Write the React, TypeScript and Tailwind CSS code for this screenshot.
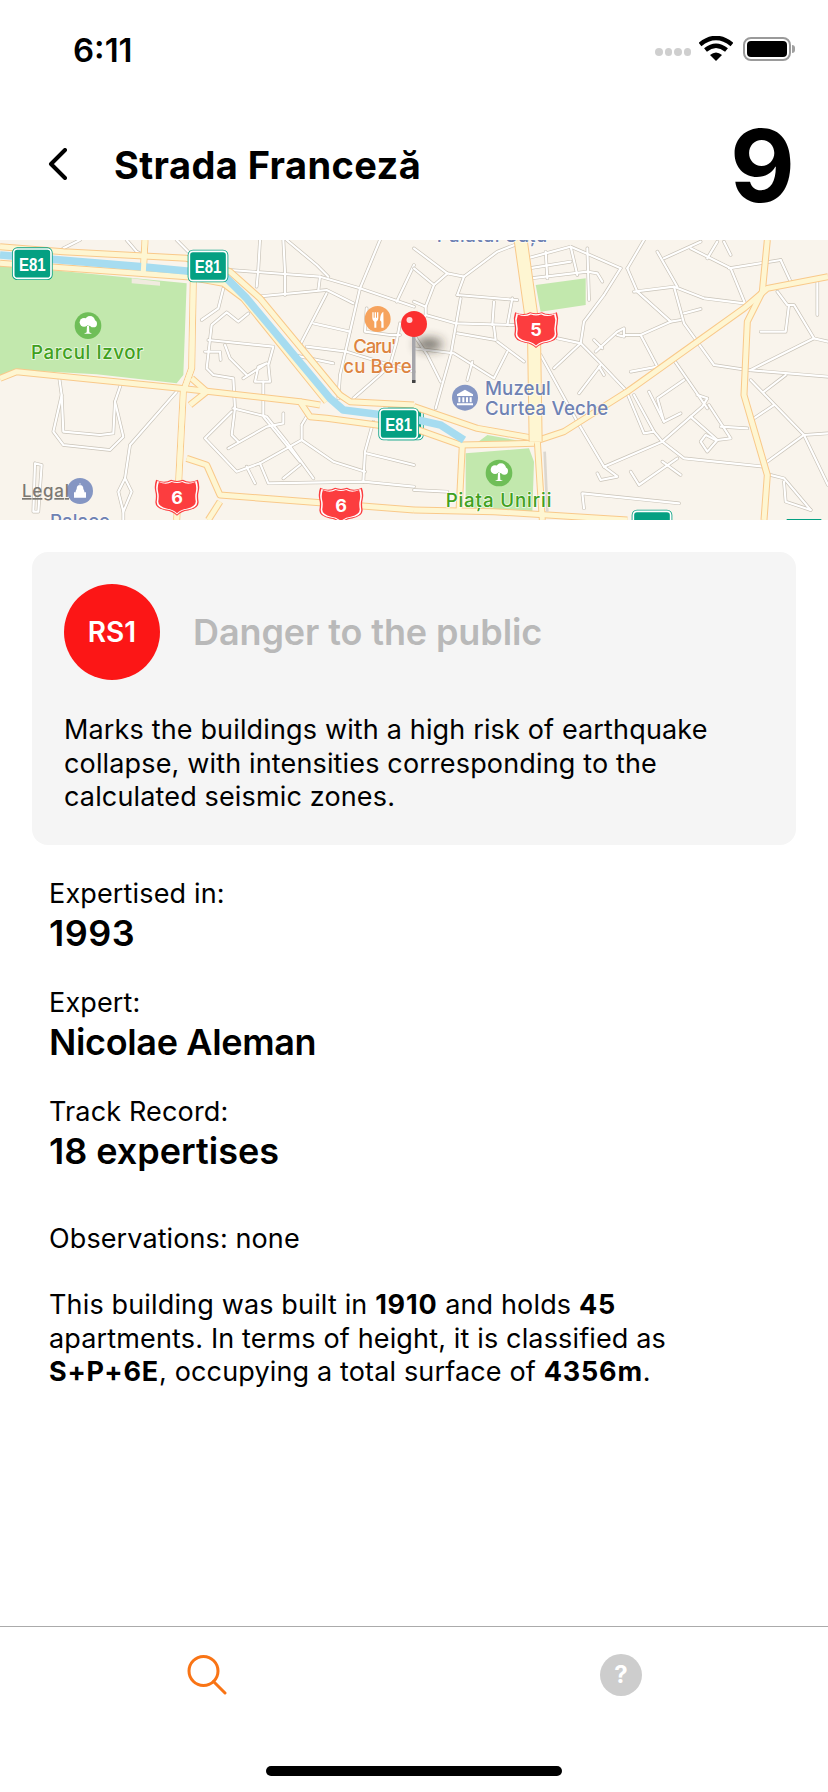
const minorL = [
  "190,40 240,15","380,15 410,50 430,60","530,15 565,50","780,15 775,100 770,155","850,15 855,110 855,180",
  "690,105 960,125 1080,160 1242,215","860,15 950,90 985,125","1140,15 1080,160 1020,420 1015,490","1242,90 1190,200",
  "770,185 980,165 1060,205","960,125 955,165","980,175 900,330","940,265 1050,290","920,335 1040,350 1170,390 1242,410",
  "880,360 1000,385","1100,220 1095,290 1170,300 1200,300","1200,265 1190,320 1170,390 1140,420 1060,490",
  "670,160 655,220 605,255","745,235 715,260 680,232 635,270 620,400 640,420 700,430 705,520 695,600 715,620",
  "625,315 820,335 805,390 810,440 765,440 775,395 800,385 730,430","615,350 660,350 662,375","675,330 690,370 740,420",
  "700,520 800,545 860,620 940,730","790,440 790,545 900,680","850,535 850,565 800,575 685,640",
  "905,570 905,615 780,685 710,710 615,610 695,530","920,545 905,570","780,685 805,745 1090,740 1242,755","740,695 765,745",
  "900,690 850,730","1120,560 1095,650 1090,740","1100,655 1242,690","905,615 1000,680 1095,710","530,470 390,630 375,730",
  "178,430 185,480 160,590 190,630 330,645 370,605 345,500 362,450","185,480 190,590 300,600 340,595 345,500",
  "375,730 355,770 370,830 395,770 375,730","370,830 370,855","105,685 125,690 115,830 100,830 105,685",
];
const minorR = [
  "0,40 100,115 150,125 250,50 340,15","0,100 60,150 35,215","100,115 60,150","130,180 310,195","150,125 130,180","35,240 125,265 300,270",
  "140,190 110,360 65,520","240,200 235,270","295,190 280,270","130,295 245,315 240,275","0,340 120,355 240,430 280,350",
  "250,320 330,380","175,380 160,435","0,300 40,360 80,440","340,70 470,35 620,100","345,100 470,80","350,130 520,110 550,115 565,140",
  "470,35 490,120","395,50 400,130","520,40 525,195","640,100 690,15","620,100 570,180 510,260 500,325 555,380 640,470","430,310 500,325 420,400",
  "380,360 490,560 570,695 745,620 865,515 880,490 850,480","560,390 495,475","555,395 570,420","540,315 565,340",
  "545,350 610,290 630,280 630,305 610,300","635,300 680,300 770,260 800,255","680,300 730,395 650,410","780,375 880,520",
  "810,435 730,490 750,560 800,535","705,470 750,560","640,475 690,595 720,590 660,480","720,590 745,620 810,670 1050,695",
  "830,545 910,615 950,610 885,510","910,615 880,650 860,620 875,600 905,615","660,170 780,155 810,265 900,390 1000,405 1242,425",
  "780,155 870,190 990,205","730,50 790,155","640,100 670,170 770,260","750,70 860,20","830,40 950,100 995,210","945,100 1100,75","880,70 910,20",
  "950,60 930,20","810,235 860,222","1100,75 1130,140","1210,140 1210,240","1090,170 1120,210 1140,210 1200,310 1242,320","1040,290 1115,290 1125,210",
  "1200,310 1010,405","1010,435 1170,600 1242,595","1170,600 1242,750","1080,510 1020,550","1000,580 920,575","1060,680 1170,600","1115,420 1050,470",
  "1070,720 1110,730 1190,825","1110,740 1115,800 1190,825","550,715 560,735 610,725 570,695","650,710 675,750 790,670","745,680 800,720",
  "510,820 505,775 795,805","0,765 100,770","0,200 35,215 35,240 0,300",
];
const majorL = [
  "0,35 190,50 560,70 690,110 780,190 1020,480 1050,500 1242,510","0,85 560,125 670,145 730,190 980,500",
  "435,15 430,110","0,430 50,410 540,460 900,500 930,545 980,550 1242,585","580,130 575,400 550,470 530,855",
  "560,670 620,690 660,780 1242,825","660,800 625,855","575,430 620,470 570,510","900,500 960,510",
];
const majorR = [
  "1060,15 1045,170 1000,260 990,480 1060,720 1050,855","360,620 450,590 640,470 850,320 990,220 1060,160 1242,125",
  "0,515 190,580 360,610","0,580 140,630 360,625","145,630 135,830","0,825 240,830 640,855","370,620 385,855",
];

const SHIELD = "M-56,-46 Q-34,-36 -16,-46 Q0,-40 16,-46 Q34,-36 56,-46 Q62,-30 58,-14 Q55,-4 58,14 Q58,30 30,36 Q12,38 0,50 Q-12,38 -30,36 Q-58,30 -58,14 Q-55,-4 -58,-14 Q-62,-30 -56,-46 Z";

function Shield({ x, y, n }: { x: number; y: number; n: string }) {
  return (
    <g transform={`translate(${x} ${y})`}>
      <path d={SHIELD} fill="#fc3d3f" transform="scale(1.12)" />
      <path d={SHIELD} fill="#fff" transform="scale(1.05)" />
      <path d={SHIELD} fill="#fc3d3f" transform="scale(0.97)" />
      <text y="20" textAnchor="middle" fontSize="54" fontWeight="700" fill="#fff" fontFamily="Inter, sans-serif">{n}</text>
    </g>
  );
}

function Badge({ x, y, clip }: { x: number; y: number; clip?: boolean }) {
  return (
    <g transform={`translate(${x} ${y})`}>
      <rect x="-61" y="-49" width="122" height="98" rx="16" fill="#04a082" />
      <rect x="-56" y="-44" width="112" height="88" rx="11" fill="none" stroke="#fff" strokeWidth="5" />
      {!clip && <text y="21" textAnchor="middle" fontSize="56" fontWeight="700" fill="#fff" fontFamily="'Liberation Sans', sans-serif" textLength="80" lengthAdjust="spacingAndGlyphs">E81</text>}
    </g>
  );
}

function Tree({ x, y }: { x: number; y: number }) {
  return (
    <g transform={`translate(${x} ${y})`}>
      <circle r="40" fill="#6fbe58" />
      <circle cy="-10" cx="-12" r="13" fill="#fff" />
      <circle cy="-14" cx="6" r="15" fill="#fff" />
      <circle cy="-6" cx="16" r="11" fill="#fff" />
      <path d="M-3,0 L3,0 L4,20 L12,24 L-12,24 L-4,20 Z" fill="#fff" />
    </g>
  );
}

function Museum({ x, y, dome }: { x: number; y: number; dome?: boolean }) {
  return (
    <g transform={`translate(${x} ${y})`}>
      <circle r="39" fill="#8596c3" />
      {dome ? (
        <path d="M-10,-6 A10,12 0 0 1 10,-6 L13,0 L13,4 L18,4 L18,20 L-18,20 L-18,4 L-13,4 L-13,0 Z M-1,-24 L1,-24 L1,-16 L-1,-16 Z" fill="#fff" />
      ) : (
        <path d="M0,-24 L24,-10 L24,-5 L-24,-5 L-24,-10 Z M-20,-1 L-14,-1 L-14,14 L-20,14 Z M-8,-1 L-2,-1 L-2,14 L-8,14 Z M3,-1 L9,-1 L9,14 L3,14 Z M14,-1 L20,-1 L20,14 L14,14 Z M-24,17 L24,17 L24,23 L-24,23 Z" fill="#fff" />
      )}
    </g>
  );
}

function Label({ x, y, fill, len, children }: { x: number; y: number; fill: string; len: number; children: string }) {
  return (
    <text x={x} y={y} fontSize={56} fontWeight="500" fill={fill} stroke="#fff" strokeOpacity="0.7" strokeWidth="5" paintOrder="stroke" fontFamily="Inter, sans-serif" textLength={len} lengthAdjust="spacing">{children}</text>
  );
}

function Roads({ minor, major }: { minor: string[]; major: string[] }) {
  return (
    <>
      {minor.map((p, i) => <polyline key={i} points={p} fill="none" stroke="#c9c3b8" strokeWidth="10.5" strokeLinejoin="round" strokeLinecap="round" />)}
      {minor.map((p, i) => <polyline key={i} points={p} fill="none" stroke="#ffffff" strokeWidth="6.5" strokeLinejoin="round" strokeLinecap="round" />)}
      {major.map((p, i) => <polyline key={i} points={p} fill="none" stroke="#f9c98a" strokeWidth="21" strokeLinejoin="round" />)}
      {major.map((p, i) => <polyline key={i} points={p} fill="none" stroke="#fef6d2" strokeWidth="15" strokeLinejoin="round" />)}
    </>
  );
}

function MapArt() {
  return (
    <svg viewBox="0 0 828 280" width="828" height="280" className="block">
      <defs>
        <filter id="pinblur" x="-100%" y="-150%" width="300%" height="400%"><feGaussianBlur stdDeviation="16" /></filter>
      </defs>
      <rect width="828" height="280" fill="#f9f4ec" />
      <g transform="translate(0 -5) scale(0.33333)">
        <polygon points="0,90 560,145 550,420 530,445 290,418 50,405 0,420" fill="#c2e8ad" />
        <polygon points="395,130 480,140 480,152 395,145" fill="#f0ebdf" />
        <Roads minor={minorL} major={majorL} />
        <polyline points="0,60 420,95 560,108 680,130 740,190 990,490 1030,525 1150,540" fill="none" stroke="#a6dcf0" strokeWidth="23" strokeLinejoin="round" />
        <polyline points="580,130 575,400 550,470 530,855" fill="none" stroke="#fef6d2" strokeWidth="15" />
        <polyline points="435,15 430,110" fill="none" stroke="#fef6d2" strokeWidth="15" />
        <Badge x={97} y={86} />
        <Badge x={624} y={93} />
        <Badge x={1210} y={567} />
        <Shield x={531} y={786} n="6" />
        <Shield x={1023} y={810} n="6" />
        <Tree x={264} y={272} />
        <Label x={93} y={373} fill="#3fa020" len={337}>Parcul Izvor</Label>
        <circle cx="1133" cy="252" r="39" fill="#f6a35d" />
        <path d="M1117,232 L1117,250 Q1117,258 1123,260 L1123,278 L1129,278 L1129,260 Q1135,258 1135,250 L1135,232 L1131,232 L1131,248 L1128,248 L1128,232 L1124,232 L1124,248 L1121,248 L1121,232 Z M1150,230 Q1140,236 1140,256 L1144,260 L1144,278 L1151,278 Z" fill="#fff" />
        <Label x={1060} y={355} fill="#dd8440" len={130}>Caru'</Label>
        <Label x={1030} y={415} fill="#dd8440" len={205}>cu Bere</Label>
        <Museum x={240} y={768} dome />
        <Label x={150} y={878} fill="#6f82b3" len={180}>Palace</Label>
      </g>
      <g transform="translate(414 -5) scale(0.33333)">
        <polygon points="365,150 515,130 515,210 380,230" fill="#c2e8ad" />
        <polygon points="155,655 345,640 360,680 355,830 155,820" fill="#c2e8ad" />
        <polygon points="180,630 220,600 330,620" fill="#c2e8ad" />
        <Roads minor={minorR} major={majorR} />
        <polyline points="320,15 360,300 365,620" fill="none" stroke="#f9c98a" strokeWidth="42" strokeLinejoin="round" />
        <polyline points="320,15 360,300 365,620" fill="none" stroke="#fef6d2" strokeWidth="36" strokeLinejoin="round" />
        <polyline points="392,650 400,830" fill="none" stroke="#dcd7cf" strokeWidth="8" />
        <polyline points="-10,550 80,570 150,615" fill="none" stroke="#a6dcf0" strokeWidth="23" />
        <Badge x={-46} y={567} />
        <Badge x={714} y={873} clip />
        <rect x="1118" y="852" width="104" height="6" fill="#04a082" />
        <Shield x={366} y={283} n="5" />
        <Museum x={153} y={488} />
        <Label x={213} y={480} fill="#6f82b3" len={197}>Muzeul</Label>
        <Label x={213} y={540} fill="#6f82b3" len={370}>Curtea Veche</Label>
        <Label x={68} y={20} fill="#6f82b3" len={332}>Palatul Suțu</Label>
        <Tree x={255} y={714} />
        <Label x={95} y={815} fill="#3fa020" len={317}>Piața Unirii</Label>
        <ellipse cx="45" cy="328" rx="40" ry="17" fill="#2f2a24" opacity="0.75" filter="url(#pinblur)" />
      </g>
      <text x="22" y="257" fontSize="17" fontWeight="500" fill="#7b7872" textDecoration="underline" fontFamily="Inter, sans-serif" textLength="47">Legal</text>
      <rect x="412" y="88" width="3.5" height="54" fill="#a6a6ab" />
      <rect x="412" y="140" width="3.5" height="3" fill="#444" />
      <circle cx="414" cy="84" r="13" fill="#fb3030" />
      <circle cx="409.5" cy="80" r="3" fill="#ffd9d9" />
    </svg>
  );
}

export default function App() {
  return (
    <div className="w-[828px] h-[1792px] flex flex-col bg-white text-black font-[Inter,sans-serif] overflow-hidden">
      {/* status bar */}
      <div className="h-[96px] shrink-0 flex items-start justify-between pl-[73px] pr-[33px] pt-[30px]">
        <span className="text-[33px] leading-[40px] font-semibold">6:11</span>
        <div className="flex items-center mt-[6px]">
          <div className="flex gap-[2px] mr-[8px] mt-[7px]">
            <span className="w-[7.5px] h-[7.5px] rounded-full bg-[#cfcfcf]" />
            <span className="w-[7.5px] h-[7.5px] rounded-full bg-[#cfcfcf]" />
            <span className="w-[7.5px] h-[7.5px] rounded-full bg-[#cfcfcf]" />
            <span className="w-[7.5px] h-[7.5px] rounded-full bg-[#cfcfcf]" />
          </div>
          <svg width="34" height="25" viewBox="0 0 34 25" className="mr-[10px]">
            <path d="M1,8.5 Q17,-4.5 33,8.5" fill="none" stroke="#000" strokeWidth="4.5" />
            <path d="M6.5,14 Q17,5.5 27.5,14" fill="none" stroke="#000" strokeWidth="4.5" />
            <path d="M11,19 L17,25 L23,19 Q17,14 11,19 Z" fill="#000" />
          </svg>
          <div className="w-[48px] h-[24px] rounded-[8px] border-2 border-[#9a9a9a] p-[2px]">
            <div className="w-full h-full rounded-[4px] bg-black" />
          </div>
          <div className="w-[3px] h-[8px] rounded-r-full bg-[#a0a0a0] ml-[1px]" />
        </div>
      </div>

      {/* header */}
      <div className="h-[144px] shrink-0 flex items-center pl-[47px] pr-[33px]">
        <svg width="20" height="32" viewBox="0 0 20 32" className="shrink-0 mb-[8px]">
          <path d="M18,2 L4,16 L18,30" fill="none" stroke="#000" strokeWidth="4" strokeLinecap="round" strokeLinejoin="round" />
        </svg>
        <h1 className="ml-[47px] text-[38px] leading-[44px] font-bold mb-[6px] tracking-[0.4px]">Strada Franceză</h1>
        <span className="ml-auto text-[100px] leading-[100px] font-bold mb-[4px]">9</span>
      </div>

      {/* map */}
      <div className="h-[280px] shrink-0">
        <MapArt />
      </div>

      {/* card */}
      <div className="mx-[32px] mt-[32px] h-[293px] shrink-0 rounded-[16px] bg-[#f5f5f5] pl-[32px] pr-[40px] pt-[32px]">
        <div className="flex items-center">
          <div className="w-[96px] h-[96px] rounded-full bg-[#fc1616] flex items-center justify-center text-white text-[28px] font-semibold">RS1</div>
          <h2 className="ml-[33px] text-[36px] leading-[44px] font-semibold text-[#b9b9b9] tracking-[-0.1px]">Danger to the public</h2>
        </div>
        <p className="mt-[33px] text-[27px] leading-[33.5px] tracking-[0.15px]">Marks the buildings with a high risk of earthquake collapse, with intensities corresponding to the calculated seismic zones.</p>
      </div>

      {/* details */}
      <div className="pl-[49px] w-[700px] pt-[32px]">
        <div className="text-[27px] leading-[34px] tracking-[0.15px]">Expertised in:</div>
        <div className="text-[36px] leading-[44px] font-semibold tracking-[0.5px]">1993</div>
        <div className="mt-[31px] text-[27px] leading-[34px] tracking-[0.15px]">Expert:</div>
        <div className="text-[36px] leading-[44px] font-semibold tracking-[-0.35px]">Nicolae Aleman</div>
        <div className="mt-[31px] text-[27px] leading-[34px] tracking-[0.15px]">Track Record:</div>
        <div className="text-[36px] leading-[44px] font-semibold">18 expertises</div>
        <div className="mt-[49px] text-[27px] leading-[34px] tracking-[0.1px]">Observations: none</div>
        <p className="mt-[32px] text-[27px] leading-[33.5px] tracking-[0.15px]">
          This building was built in <b className="font-bold tracking-[0.8px]">1910</b> and holds <b className="font-bold tracking-[0.8px]">45</b> apartments. In terms of height, it is classified as <b className="font-bold tracking-[0.8px]">S+P+6E</b>, occupying a total surface of <b className="font-bold tracking-[0.8px]">4356m</b>.
        </p>
      </div>

      <div className="flex-1" />

      {/* tab bar */}
      <div className="h-[166px] shrink-0 border-t-[1.5px] border-[#ababab] relative">
        <div className="flex h-[96px] items-center">
          <div className="w-1/2 flex justify-center">
            <svg width="40" height="40" viewBox="0 0 40 40">
              <circle cx="16.5" cy="16" r="14.5" fill="none" stroke="#f97415" strokeWidth="3" />
              <path d="M26.5,26.5 L38,38" fill="none" stroke="#f97415" strokeWidth="3" strokeLinecap="round" />
            </svg>
          </div>
          <div className="w-1/2 flex justify-center">
            <div className="w-[42px] h-[42px] rounded-full bg-[#cdcdcd] flex items-center justify-center text-white font-bold text-[24px] leading-none">?</div>
          </div>
        </div>
        <div className="absolute left-[266px] bottom-[16px] w-[296px] h-[10px] rounded-full bg-black" />
      </div>
    </div>
  );
}
